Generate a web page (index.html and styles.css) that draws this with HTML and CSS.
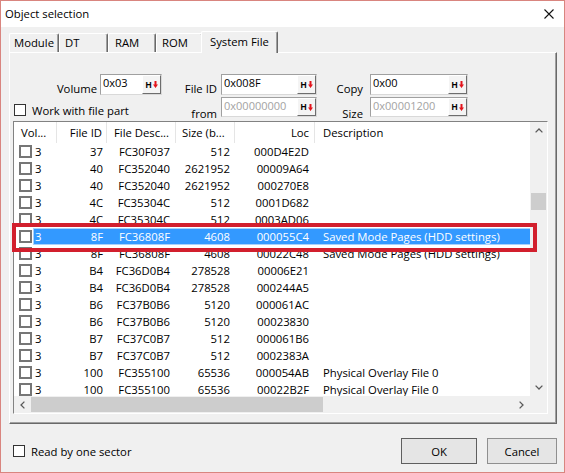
FILE: index.html
```html
<!DOCTYPE html>
<html>
<head>
<meta charset="utf-8">
<title>Object selection</title>
<link rel="stylesheet" href="styles.css">
</head>
<body>
<div class="window">
  <div class="titlebar">
    <span class="title">Object selection</span>
    <span class="close"><svg width="10" height="10" viewBox="0 0 10 10"><path d="M0.5 0.5L9.5 9.5M9.5 0.5L0.5 9.5" stroke="#111" stroke-width="1.1" fill="none"/></svg></span>
  </div>
  <div class="client">
    <div class="tabs">
      <div class="tab tab-module">Module</div>
      <div class="tab tab-dt">DT</div>
      <div class="tab tab-ram">RAM</div>
      <div class="tab tab-rom">ROM</div>
      <div class="tab tab-sys active">System File</div>
    </div>
    <div class="panel">
      <div class="fields">
        <label class="lbl r1">Volume</label>
        <div class="edit r1"><span class="val">0x03</span><span class="hbtn"><b>H</b><svg width="5" height="7" viewBox="0 0 5 7"><path d="M1.5 0h2v3.5h1.5L2.5 7L0 3.5h1.5z" fill="#e3141c"/></svg></span></div>
        <label class="lbl r1">File ID</label>
        <div class="edit r1"><span class="val">0x008F</span><span class="hbtn"><b>H</b><svg width="5" height="7" viewBox="0 0 5 7"><path d="M1.5 0h2v3.5h1.5L2.5 7L0 3.5h1.5z" fill="#e3141c"/></svg></span></div>
        <label class="lbl r1 lbl-copy">Copy</label>
        <div class="edit r1"><span class="val">0x00</span><span class="hbtn"><b>H</b><svg width="5" height="7" viewBox="0 0 5 7"><path d="M1.5 0h2v3.5h1.5L2.5 7L0 3.5h1.5z" fill="#e3141c"/></svg></span></div>

        <div class="check-part"><span class="cbox"></span><span>Work with file part</span></div>
        <label class="lbl r2">from</label>
        <div class="edit r2"><span class="val dis">0x00000000</span><span class="hbtn"><b>H</b><svg width="5" height="7" viewBox="0 0 5 7"><path d="M1.5 0h2v3.5h1.5L2.5 7L0 3.5h1.5z" fill="#e3141c"/></svg></span></div>
        <label class="lbl r2 lbl-copy">Size</label>
        <div class="edit r2"><span class="val dis">0x00001200</span><span class="hbtn"><b>H</b><svg width="5" height="7" viewBox="0 0 5 7"><path d="M1.5 0h2v3.5h1.5L2.5 7L0 3.5h1.5z" fill="#e3141c"/></svg></span></div>
      </div>

      <div class="list">
        <div class="main">
          <div class="header">
            <div class="hc c-vol">Vol...</div>
            <div class="hc c-id right">File ID</div>
            <div class="hc c-desc">File Desc...</div>
            <div class="hc c-size">Size (b...</div>
            <div class="hc c-loc right">Loc</div>
            <div class="hc c-descr">Description</div>
          </div>
          <div class="rows">
            <div class="row"><div class="cb-cell"><span class="lcb"></span></div><div class="cells"><div class="d-vol">3</div><div class="d-id">37</div><div class="d-desc">FC30F037</div><div class="d-size">512</div><div class="d-loc">000D4E2D</div><div class="d-descr"></div></div></div>
            <div class="row"><div class="cb-cell"><span class="lcb"></span></div><div class="cells"><div class="d-vol">3</div><div class="d-id">40</div><div class="d-desc">FC352040</div><div class="d-size">2621952</div><div class="d-loc">00009A64</div><div class="d-descr"></div></div></div>
            <div class="row"><div class="cb-cell"><span class="lcb"></span></div><div class="cells"><div class="d-vol">3</div><div class="d-id">40</div><div class="d-desc">FC352040</div><div class="d-size">2621952</div><div class="d-loc">000270E8</div><div class="d-descr"></div></div></div>
            <div class="row"><div class="cb-cell"><span class="lcb"></span></div><div class="cells"><div class="d-vol">3</div><div class="d-id">4C</div><div class="d-desc">FC35304C</div><div class="d-size">512</div><div class="d-loc">0001D682</div><div class="d-descr"></div></div></div>
            <div class="row"><div class="cb-cell"><span class="lcb"></span></div><div class="cells"><div class="d-vol">3</div><div class="d-id">4C</div><div class="d-desc">FC35304C</div><div class="d-size">512</div><div class="d-loc">0003AD06</div><div class="d-descr"></div></div></div>
            <div class="row sel"><div class="cb-cell"><span class="lcb"></span></div><div class="cells"><div class="d-vol">3</div><div class="d-id">8F</div><div class="d-desc">FC36808F</div><div class="d-size">4608</div><div class="d-loc">000055C4</div><div class="d-descr">Saved Mode Pages (HDD settings)</div></div></div>
            <div class="row"><div class="cb-cell"><span class="lcb"></span></div><div class="cells"><div class="d-vol">3</div><div class="d-id">8F</div><div class="d-desc">FC36808F</div><div class="d-size">4608</div><div class="d-loc">00022C48</div><div class="d-descr">Saved Mode Pages (HDD settings)</div></div></div>
            <div class="row"><div class="cb-cell"><span class="lcb"></span></div><div class="cells"><div class="d-vol">3</div><div class="d-id">B4</div><div class="d-desc">FC36D0B4</div><div class="d-size">278528</div><div class="d-loc">00006E21</div><div class="d-descr"></div></div></div>
            <div class="row"><div class="cb-cell"><span class="lcb"></span></div><div class="cells"><div class="d-vol">3</div><div class="d-id">B4</div><div class="d-desc">FC36D0B4</div><div class="d-size">278528</div><div class="d-loc">000244A5</div><div class="d-descr"></div></div></div>
            <div class="row"><div class="cb-cell"><span class="lcb"></span></div><div class="cells"><div class="d-vol">3</div><div class="d-id">B6</div><div class="d-desc">FC37B0B6</div><div class="d-size">5120</div><div class="d-loc">000061AC</div><div class="d-descr"></div></div></div>
            <div class="row"><div class="cb-cell"><span class="lcb"></span></div><div class="cells"><div class="d-vol">3</div><div class="d-id">B6</div><div class="d-desc">FC37B0B6</div><div class="d-size">5120</div><div class="d-loc">00023830</div><div class="d-descr"></div></div></div>
            <div class="row"><div class="cb-cell"><span class="lcb"></span></div><div class="cells"><div class="d-vol">3</div><div class="d-id">B7</div><div class="d-desc">FC37C0B7</div><div class="d-size">512</div><div class="d-loc">000061B6</div><div class="d-descr"></div></div></div>
            <div class="row"><div class="cb-cell"><span class="lcb"></span></div><div class="cells"><div class="d-vol">3</div><div class="d-id">B7</div><div class="d-desc">FC37C0B7</div><div class="d-size">512</div><div class="d-loc">0002383A</div><div class="d-descr"></div></div></div>
            <div class="row"><div class="cb-cell"><span class="lcb"></span></div><div class="cells"><div class="d-vol">3</div><div class="d-id">100</div><div class="d-desc">FC355100</div><div class="d-size">65536</div><div class="d-loc">000054AB</div><div class="d-descr">Physical Overlay File 0</div></div></div>
            <div class="row"><div class="cb-cell"><span class="lcb"></span></div><div class="cells"><div class="d-vol">3</div><div class="d-id">100</div><div class="d-desc">FC355100</div><div class="d-size">65536</div><div class="d-loc">00022B2F</div><div class="d-descr">Physical Overlay File 0</div></div></div>
          </div>
        </div>
        <div class="vscroll">
          <div class="sbtn"><svg width="8" height="5" viewBox="0 0 8 5"><path d="M0.6 4.4L4 1L7.4 4.4" fill="none" stroke="#5a5a5a" stroke-width="1.3"/></svg></div>
          <div class="vtrack"><div class="vthumb"></div></div>
          <div class="sbtn"><svg width="8" height="5" viewBox="0 0 8 5"><path d="M0.6 0.6L4 4L7.4 0.6" fill="none" stroke="#5a5a5a" stroke-width="1.3"/></svg></div>
        </div>
        <div class="hscroll">
          <div class="sbtn"><svg width="5" height="8" viewBox="0 0 5 8"><path d="M4.4 0.6L1 4L4.4 7.4" fill="none" stroke="#5a5a5a" stroke-width="1.3"/></svg></div>
          <div class="htrack"><div class="hthumb"></div></div>
          <div class="sbtn"><svg width="5" height="8" viewBox="0 0 5 8"><path d="M0.6 0.6L4 4L0.6 7.4" fill="none" stroke="#5a5a5a" stroke-width="1.3"/></svg></div>
        </div>
        <div class="corner"></div>
        <div class="redbox"></div>
      </div>
    </div>
    <div class="footer">
      <div class="check-read"><span class="cbox"></span><span>Read by one sector</span></div>
      <button class="btn btn-ok">OK</button>
      <button class="btn btn-cancel">Cancel</button>
    </div>
  </div>
</div>
</body>
</html>
```

FILE: styles.css
```css
* { box-sizing: border-box; }
html, body { margin: 0; padding: 0; background: #fff; }
body {
  font-family: "Open Sans", "Noto Sans", sans-serif;
  font-size: 11.3px;
  color: #000;
}

.window {
  width: 565px;
  height: 473px;
  border: 1px solid #d9857f;
  background: #f0f0f0;
  display: flex;
  flex-direction: column;
  overflow: hidden;
}

.titlebar {
  flex: none;
  height: 26px;
  background: #fff;
  display: flex;
  align-items: center;
  justify-content: space-between;
  padding: 0 10px 0 4px;
}
.title { font-size: 11.3px; line-height: 16px; }
.close { display: flex; width: 10px; height: 10px; }

.client {
  flex: 1;
  display: flex;
  flex-direction: column;
  padding: 4px 7px 0 8px;
}

/* tabs */
.tabs {
  display: flex;
  align-items: flex-end;
  height: 21px;
  flex: none;
}
.tab {
  height: 19px;
  line-height: 18px;
  padding-left: 5px;
  border-top: 1px solid #fff;
  border-left: 1px solid #fff;
  border-right: 1px solid #696969;
  box-shadow: inset -1px 0 #a0a0a0;
  border-radius: 2px 2px 0 0;
  white-space: nowrap;
}
.tab-module { width: 50px; padding-left: 4px; }
.tab-dt { width: 49px; }
.tab-ram { width: 48px; padding-left: 6px; }
.tab-rom { width: 47px; }
.tab-sys { width: 77px; }
.tab.active {
  position: relative;
  z-index: 1;
  height: 22px;
  line-height: 20px;
  margin-left: -2px;
  margin-bottom: -1px;
  padding-left: 8px;
  background: #f0f0f0;
}

/* panel */
.panel {
  flex: none;
  height: 372px;
  border: 1px solid;
  border-color: #fff #696969 #696969 #fff;
  box-shadow: inset -1px -1px #a0a0a0;
}

.fields {
  display: grid;
  grid-template-columns: 90px 62px 59px 96px 53px 98px;
  grid-template-rows: 21px 20px;
  row-gap: 2px;
  margin-top: 21px;
}
.lbl {
  text-align: right;
  padding-right: 3px;
  line-height: 14px;
  align-self: end;
  white-space: nowrap;
}
.lbl.r1 { margin-bottom: -1px; }
.lbl.r2 { margin-bottom: -4px; grid-column: 3; }
.lbl.lbl-copy { padding-right: 7px; }
.lbl.r2.lbl-copy { grid-column: 5; }
.fields > .lbl:nth-child(3) { padding-right: 4px; }
.fields > .lbl.r2:not(.lbl-copy) { padding-right: 4px; }

.edit {
  display: flex;
  background: #fff;
  border: 1px solid;
  border-color: #a0a0a0 #d9d9d9 #d9d9d9 #a0a0a0;
}
.val {
  flex: 1;
  padding: 1px 0 0 2px;
  line-height: 14px;
  font-size: 11px;
  white-space: nowrap;
  overflow: hidden;
}
.val.dis { color: #a3a3a3; }
.hbtn {
  flex: none;
  width: 19px;
  display: flex;
  align-items: center;
  justify-content: center;
  gap: 1px;
  background: #f4f4f4;
  border: 1px solid;
  border-color: #fff #6d6d6d #6d6d6d #fff;
}
.hbtn b {
  font-family: "Liberation Sans", Arial, sans-serif;
  font-weight: bold;
  font-size: 8.5px;
  line-height: 8px;
}

.check-part {
  grid-column: 1 / 3;
  grid-row: 2;
  align-self: end;
  display: flex;
  align-items: center;
  gap: 6px;
  padding-left: 4px;
  height: 14px;
  white-space: nowrap;
}
.cbox {
  width: 12px;
  height: 12px;
  flex: none;
  background: #fff;
  border: 1px solid #333;
}

/* list view */
.list {
  position: relative;
  margin: 4px 0 0 3px;
  width: 535px;
  height: 293px;
  border: 1px solid;
  border-color: #828282 #fff #fff #828282;
  background: #fff;
  display: grid;
  grid-template-columns: 516px 17px;
  grid-template-rows: 274px 17px;
}
.main {
  overflow: hidden;
  background: #fff;
}
.header {
  display: flex;
  height: 21px;
  width: 820px;
}
.hc {
  flex: none;
  height: 21px;
  line-height: 21px;
  border-right: 1px solid #e5e5e5;
  white-space: nowrap;
  overflow: hidden;
}
.hc.right { text-align: right; }
.c-vol { width: 43px; padding-left: 7px; }
.c-id { width: 50px; padding-right: 4px; }
.c-desc { width: 69px; padding-left: 7px; }
.c-size { width: 59px; padding-left: 6px; }
.c-loc { width: 80px; padding-right: 5px; }
.c-descr { width: 505px; padding-left: 8px; border-right: none; }

.rows { width: 820px; }
.row {
  display: flex;
  height: 17px;
  line-height: 17px;
  white-space: nowrap;
}
.cb-cell {
  flex: none;
  width: 19px;
  display: flex;
  align-items: center;
  padding-left: 5px;
}
.lcb {
  width: 13px;
  height: 13px;
  border: 2px solid #767676;
  background: #fff;
  flex: none;
}
.cells { display: flex; flex: none; }
.cells > div { flex: none; overflow: hidden; }
.d-vol { width: 24px; padding-left: 2px; }
.d-id { width: 50px; text-align: right; padding-right: 4px; }
.d-desc { width: 69px; text-align: right; padding-right: 6px; }
.d-size { width: 59px; text-align: right; padding-right: 5px; }
.d-loc { width: 80px; text-align: right; padding-right: 6px; }
.d-descr { width: 505px; padding-left: 8px; }
.row.sel .cells {
  background: #3399ff;
  color: #fff;
  box-shadow: inset 0 0 0 1px #a9d2fb;
}

/* scrollbars */
.vscroll {
  grid-column: 2;
  grid-row: 1;
  display: flex;
  flex-direction: column;
  background: #f0f0f0;
}
.sbtn {
  flex: none;
  width: 17px;
  height: 17px;
  display: flex;
  align-items: center;
  justify-content: center;
  background: #f0f0f0;
}
.vtrack { flex: 1; padding: 54px 1px 0 1px; }
.vthumb { height: 17px; background: #cdcdcd; }
.hscroll {
  grid-column: 1;
  grid-row: 2;
  display: flex;
  background: #f0f0f0;
}
.htrack { flex: 1; padding: 1px 0; }
.hthumb { width: 292px; height: 15px; background: #cdcdcd; }
.corner { grid-column: 2; grid-row: 2; background: #f0f0f0; }

.redbox {
  position: absolute;
  left: -2px;
  top: 101px;
  width: 525px;
  height: 29px;
  border: 4px solid #d21f2d;
  pointer-events: none;
}

/* footer */
.footer {
  flex: none;
  display: flex;
  align-items: center;
  height: 26px;
  margin-top: 14px;
}
.check-read {
  display: flex;
  align-items: center;
  gap: 6px;
  margin-left: 4px;
  white-space: nowrap;
}
.btn {
  font-family: "Open Sans", "Noto Sans", sans-serif;
  font-size: 11.3px;
  color: #000;
  height: 26px;
  padding: 0;
  background: #e5e5e5;
  border: 1px solid #8f8f8f;
}
.btn-ok { width: 76px; margin-left: auto; border-color: #5f5f5f; }
.btn-cancel { width: 70px; margin-left: 10px; }
```
